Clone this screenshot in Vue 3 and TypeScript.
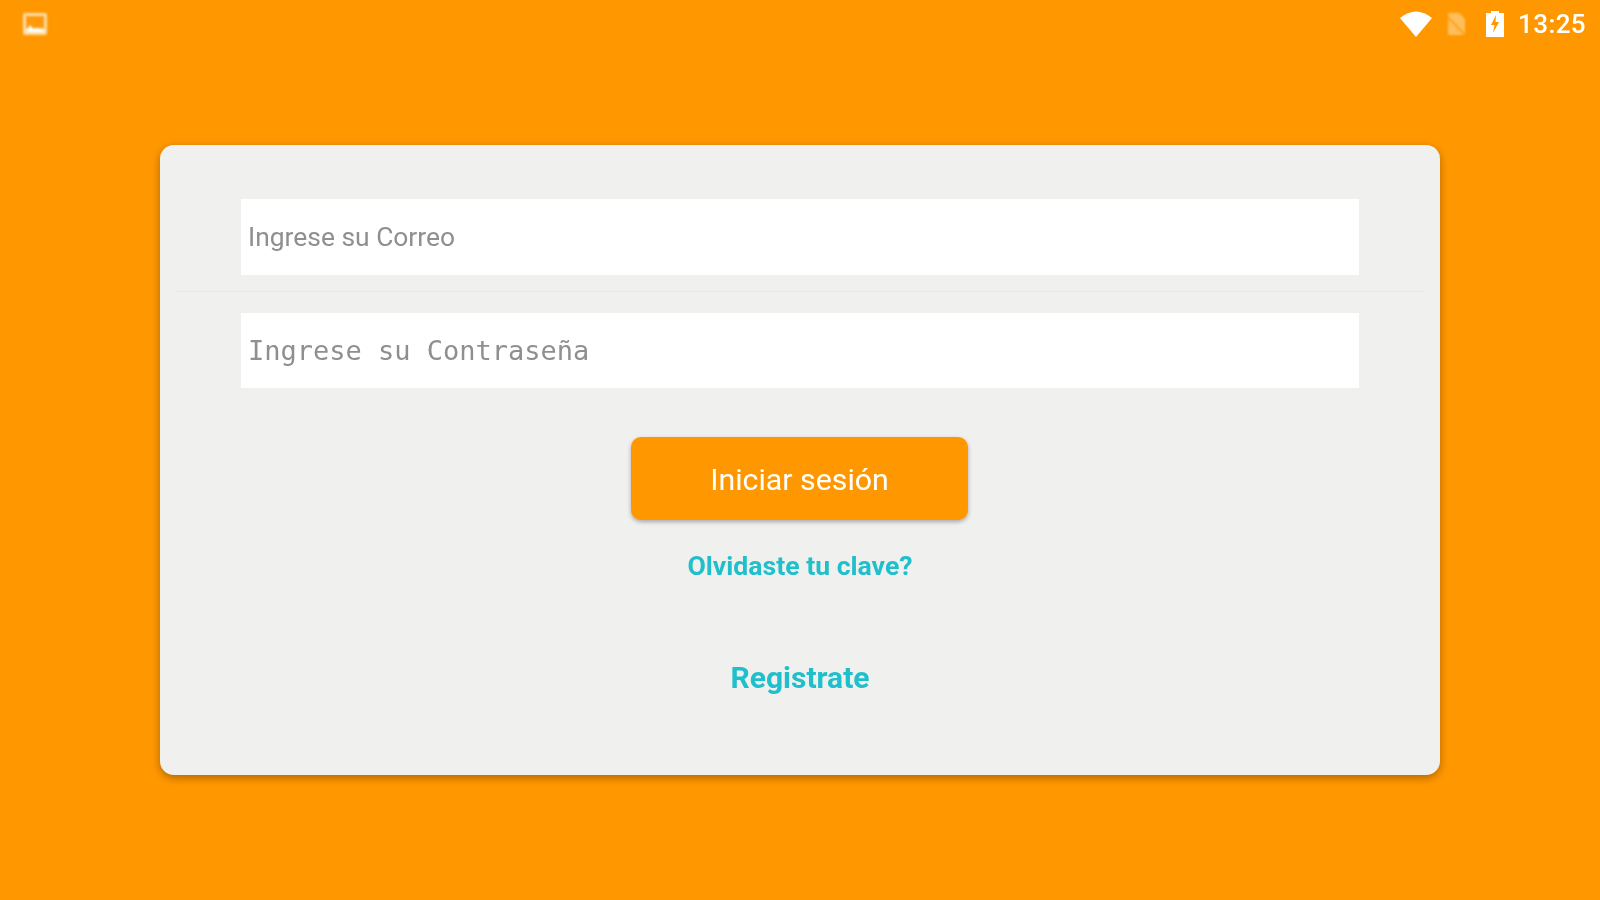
<script setup lang="ts">
const forgotLabel = 'Olvidaste tu clave?'
</script>

<template>
  <div class="screen">
    <header class="status-bar">
      <svg class="gallery" width="28" height="26" viewBox="0 0 28 26">
        <rect x="2" y="2" width="24" height="22" rx="2" fill="#ffdca6" />
        <rect x="5" y="5" width="18" height="12" fill="#ff9a0c" />
        <path d="M5 21 L9 14 L12 18 L15 17 L23 19 L23 21 Z" fill="#fff" />
      </svg>
      <div class="status-right">
        <svg class="wifi" width="34" height="28" viewBox="0 0 34 28">
          <path d="M1 8 Q17 -5 33 8 L17 27 Z" fill="#fff" />
        </svg>
        <svg class="sim" width="22" height="24" viewBox="0 0 22 24">
          <path d="M3 1 H14 L20 7 V23 H3 Z" fill="#ffbe5c" />
          <path d="M1 3 L21 24" stroke="#ff9800" stroke-width="1.5" />
        </svg>
        <svg class="battery" width="20" height="28" viewBox="0 0 20 28">
          <path d="M6 1 H14 V3 H19 V27 H1 V3 H6 Z" fill="#fff" />
          <path d="M11 5 L6 15 H9.5 L8 23 L14 12 H10.5 Z" fill="#ff9800" />
        </svg>
        <span class="clock">13:25</span>
      </div>
    </header>

    <main class="card">
      <div class="field"><span class="soft">Ingrese su Correo</span></div>
      <div class="divider"></div>
      <div class="field mono"><span class="soft">Ingrese su Contraseña</span></div>
      <button class="login" type="button"><span class="soft">Iniciar sesión</span></button>
      <a class="forgot soft">{{ forgotLabel }}</a>
      <a class="register soft">Registrate</a>
    </main>
  </div>
</template>

<style>
html, body {
  margin: 0;
  background: #ff9800;
}
</style>

<style scoped>
.screen {
  width: 1600px;
  height: 900px;
  overflow: hidden;
  background: #ff9800;
  font-family: Roboto, sans-serif;
}

.status-bar {
  height: 48px;
  display: flex;
  align-items: center;
  justify-content: space-between;
  padding: 0 14px 0 21px;
  color: #fff;
}

.status-right {
  display: flex;
  align-items: center;
}

.soft {
  display: inline-block;
  filter: blur(0.7px);
}

.gallery {
  filter: blur(1px);
}

.wifi {
  margin-right: 12px;
  filter: blur(0.5px);
}

.sim {
  margin-right: 18px;
  filter: blur(1px);
}

.battery {
  margin-right: 13px;
  filter: blur(0.7px);
}

.clock {
  font-size: 26px;
  font-weight: 500;
  letter-spacing: 0.4px;
  filter: blur(0.7px);
}

.card {
  box-sizing: border-box;
  width: 1280px;
  height: 630px;
  margin: 97px 0 0 160px;
  padding-top: 54px;
  display: flex;
  flex-direction: column;
  align-items: center;
  background: #f0f1ee;
  border-radius: 14px;
  box-shadow: 0 3px 9px rgba(130, 70, 0, 0.6);
}

.field {
  box-sizing: border-box;
  width: 1118px;
  height: 76px;
  padding-left: 7px;
  display: flex;
  align-items: center;
  background: #fff;
  color: #8f8f8f;
  font-size: 26.4px;
}

.field.mono {
  height: 75px;
  font-family: "DejaVu Sans Mono", monospace;
  font-size: 27px;
}

.divider {
  width: 1250px;
  height: 1px;
  margin: 16px 0 21px;
  background: #e6e7e3;
}

.login {
  width: 337px;
  height: 83px;
  margin: 49px 1px 0 0;
  padding: 2px 0 0;
  border: none;
  border-radius: 10px;
  background: #ff9800;
  color: #fff;
  font-family: inherit;
  font-size: 30.3px;
  font-weight: 400;
  box-shadow: 0 2px 4px rgba(0, 0, 0, 0.3);
}

.forgot {
  margin-top: 30px;
  color: #1fbfcc;
  font-size: 26.6px;
  font-weight: 700;
}

.register {
  margin-top: 79px;
  color: #1fbfcc;
  font-size: 30px;
  font-weight: 700;
}
</style>
